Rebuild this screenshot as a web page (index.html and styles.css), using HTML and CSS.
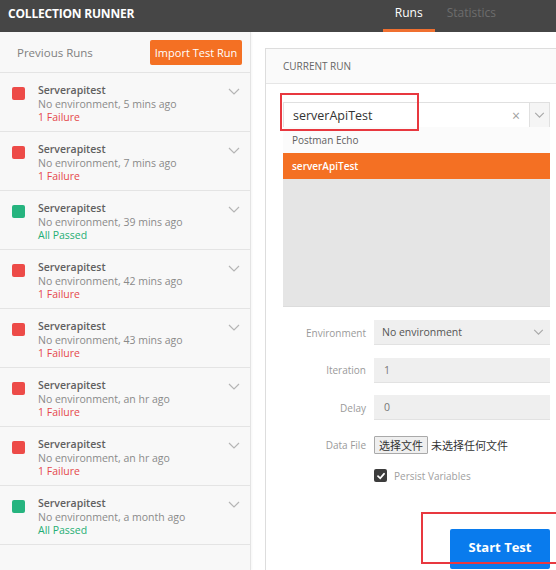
FILE: index.html
```html
<!DOCTYPE html>
<html>
<head>
<meta charset="utf-8">
<link rel="stylesheet" href="styles.css">
</head>
<body>
<div class="app">
  <header class="topbar">
    <div class="title">COLLECTION RUNNER</div>
    <nav class="tabs">
      <div class="tab active">Runs</div>
      <div class="tab">Statistics</div>
    </nav>
  </header>
  <div class="main">
    <aside class="sidebar">
      <div class="side-head">
        <span class="side-title">Previous Runs</span>
        <button class="import-btn">Import Test Run</button>
      </div>
      <div class="run"><span class="sq fail"></span><div class="run-text"><div class="run-name">Serverapitest</div><div class="run-meta">No environment, 5 mins ago</div><div class="run-status fail-t">1 Failure</div></div><svg class="chev" viewBox="0 0 12 7"><polyline points="1,1 6,6 11,1"/></svg></div>
      <div class="run"><span class="sq fail"></span><div class="run-text"><div class="run-name">Serverapitest</div><div class="run-meta">No environment, 7 mins ago</div><div class="run-status fail-t">1 Failure</div></div><svg class="chev" viewBox="0 0 12 7"><polyline points="1,1 6,6 11,1"/></svg></div>
      <div class="run"><span class="sq pass"></span><div class="run-text"><div class="run-name">Serverapitest</div><div class="run-meta">No environment, 39 mins ago</div><div class="run-status pass-t">All Passed</div></div><svg class="chev" viewBox="0 0 12 7"><polyline points="1,1 6,6 11,1"/></svg></div>
      <div class="run"><span class="sq fail"></span><div class="run-text"><div class="run-name">Serverapitest</div><div class="run-meta">No environment, 42 mins ago</div><div class="run-status fail-t">1 Failure</div></div><svg class="chev" viewBox="0 0 12 7"><polyline points="1,1 6,6 11,1"/></svg></div>
      <div class="run"><span class="sq fail"></span><div class="run-text"><div class="run-name">Serverapitest</div><div class="run-meta">No environment, 43 mins ago</div><div class="run-status fail-t">1 Failure</div></div><svg class="chev" viewBox="0 0 12 7"><polyline points="1,1 6,6 11,1"/></svg></div>
      <div class="run"><span class="sq fail"></span><div class="run-text"><div class="run-name">Serverapitest</div><div class="run-meta">No environment, an hr ago</div><div class="run-status fail-t">1 Failure</div></div><svg class="chev" viewBox="0 0 12 7"><polyline points="1,1 6,6 11,1"/></svg></div>
      <div class="run"><span class="sq fail"></span><div class="run-text"><div class="run-name">Serverapitest</div><div class="run-meta">No environment, an hr ago</div><div class="run-status fail-t">1 Failure</div></div><svg class="chev" viewBox="0 0 12 7"><polyline points="1,1 6,6 11,1"/></svg></div>
      <div class="run"><span class="sq pass"></span><div class="run-text"><div class="run-name">Serverapitest</div><div class="run-meta">No environment, a month ago</div><div class="run-status pass-t">All Passed</div></div><svg class="chev" viewBox="0 0 12 7"><polyline points="1,1 6,6 11,1"/></svg></div>
    </aside>
    <section class="content">
      <div class="card">
        <div class="card-head">CURRENT RUN</div>
        <div class="card-body">
          <div class="selector">
            <div class="sel-input">
              <span class="sel-value">serverApiTest</span>
              <span class="sel-clear">×</span>
              <span class="sel-arrow"><svg class="chev-sm" viewBox="0 0 12 7"><polyline points="1,1 6,6 11,1"/></svg></span>
            </div>
            <div class="sel-list">
              <div class="opt">Postman Echo</div>
              <div class="opt selected">serverApiTest</div>
              <div class="opt-rest"></div>
            </div>
            <div class="highlight hl-input"></div>
          </div>
          <div class="form">
            <div class="row"><label class="lbl">Environment</label><div class="field select"><span>No environment</span><svg class="chev-sm" viewBox="0 0 12 7"><polyline points="1,1 6,6 11,1"/></svg></div></div>
            <div class="row"><label class="lbl">Iteration</label><div class="field num">1</div></div>
            <div class="row"><label class="lbl">Delay</label><div class="field num">0</div></div>
            <div class="row file-row"><label class="lbl">Data File</label><div class="file"><span class="file-btn">选择文件</span><span class="file-none">未选择任何文件</span></div></div>
            <div class="row check-row"><span class="lbl"></span><div class="check"><span class="box"><svg viewBox="0 0 10 10"><polyline points="2,5.2 4.2,7.3 8,2.8"/></svg></span><span class="check-text">Persist Variables</span></div></div>
          </div>
          <div class="actions">
            <button class="start-btn">Start Test</button>
            <div class="highlight hl-start"></div>
          </div>
        </div>
      </div>
    </section>
  </div>
</div>
</body>
</html>
```
FILE: styles.css
```css
* { box-sizing: border-box; }
html, body { margin: 0; padding: 0; }
body {
  width: 556px;
  height: 570px;
  overflow: hidden;
  font-family: "Open Sans", "Noto Sans", "Noto Sans CJK SC", sans-serif;
  background: #ffffff;
}
.app { width: 556px; height: 570px; display: flex; flex-direction: column; }
.topbar {
  height: 32px;
  background: #464646;
  display: flex;
  align-items: stretch;
  padding-left: 8px;
  flex: none;
}
.title { color: #ffffff; font-weight: 700; font-size: 12px; letter-spacing: -0.2px; display: flex; align-items: center; padding-bottom: 6px; }
.tabs { margin-left: auto; margin-right: 48px; display: flex; height: 32px; }
.tab {
  height: 32px;
  padding: 0 12px 4px 12px;
  display: flex;
  align-items: center;
  font-size: 12px;
  color: #6d6d6d;
  border-bottom: 3px solid transparent;
}
.tab.active { color: #ffffff; border-bottom-color: #f07030; }

.main { flex: 1; display: flex; min-height: 0; }
.sidebar {
  width: 251px;
  flex: none;
  background: #f8f8f8;
  border-right: 1px solid #e4e4e4;
  box-shadow: 1px 0 2px rgba(0,0,0,0.04);
}
.side-head {
  height: 41px;
  border-bottom: 1px solid #e4e4e4;
  display: flex;
  align-items: center;
  justify-content: space-between;
  padding: 0 8px 0 17px;
}
.side-title { font-size: 11.5px; color: #808080; }
.import-btn {
  width: 92px;
  height: 25px;
  border: none;
  border-radius: 2px;
  background: #f47023;
  color: #ffffff;
  font-family: inherit;
  font-size: 11px;
  padding: 0;
}
.run {
  height: 59px;
  border-bottom: 1px solid #e4e4e4;
  display: flex;
  align-items: flex-start;
  padding: 11px 10px 0 12px;
}
.sq { width: 13px; height: 13px; border-radius: 2px; margin-top: 3px; flex: none; }
.sq.fail { background: #ed4b48; }
.sq.pass { background: #26b47f; }
.run-text { margin-left: 13px; flex: 1; font-size: 10.5px; line-height: 13.5px; }
.run-name { color: #606060; font-weight: 600; }
.run-meta { color: #8a8a8a; }
.fail-t { color: #e5484b; }
.pass-t { color: #1fae74; }
.chev { width: 12px; height: 7px; margin-top: 4px; fill: none; stroke: #b5b5b5; stroke-width: 1.2; }

.content { flex: 1; padding: 16px 0 0 14px; min-width: 0; }
.card {
  width: 303px;
  height: 100%;
  border: 1px solid #dddddd;
  border-bottom: none;
  background: #ffffff;
}
.card-head {
  height: 35px;
  background: #fafafa;
  border-bottom: 1px solid #e6e6e6;
  padding-left: 17px;
  display: flex;
  align-items: center;
  font-size: 10px;
  color: #666666;
}
.card-body { padding: 18px 17px 0 17px; }
.selector { position: relative; width: 267px; }
.sel-input {
  height: 25px;
  border: 1px solid #e0e0e0;
  border-bottom: none;
  display: flex;
  align-items: center;
  background: #ffffff;
}
.sel-value { flex: 1; padding-left: 9px; font-size: 12.5px; color: #333333; }
.sel-clear { width: 18px; color: #a0a0a0; font-size: 14px; text-align: center; margin-right: 4px; }
.sel-arrow {
  width: 20px;
  height: 24px;
  border-left: 1px solid #e0e0e0;
  background: #f5f5f5;
  display: flex;
  align-items: center;
  justify-content: center;
}
.chev-sm { width: 11px; height: 6px; fill: none; stroke: #a8a8a8; stroke-width: 1.3; }
.sel-list { background: #e6e6e6; }
.opt {
  height: 26px;
  padding-left: 9px;
  display: flex;
  align-items: center;
  font-size: 10px;
  color: #606060;
  background: #fbfbfb;
}
.opt.selected { background: #f47023; color: #ffffff; font-weight: 600; }
.opt-rest { height: 128px; background: #e5e5e5; border-bottom: 1px solid #dcdcdc; }
.highlight { position: absolute; border: 2px solid #e8383f; pointer-events: none; }
.hl-input { left: -3px; top: -9px; width: 139px; height: 38px; }

.form { margin-top: 13px; display: flex; flex-direction: column; }
.row { display: flex; align-items: center; height: 25px; margin-bottom: 12.5px; }
.lbl { width: 83px; text-align: right; font-size: 10px; color: #9a9a9a; flex: none; margin-right: 8px; }
.field {
  width: 176px;
  height: 25px;
  background: #efefef;
  border-bottom: 1px solid #e2e2e2;
  display: flex;
  align-items: center;
  font-size: 10.5px;
  color: #555555;
}
.field.select { padding: 0 6px 0 8px; justify-content: space-between; }
.field.num { padding-left: 10px; color: #777777; }
.file-row { height: 18px; margin-top: 3px; margin-bottom: 15px; }
.file { display: flex; align-items: center; font-family: "Noto Sans CJK SC", sans-serif; font-size: 11px; color: #333333; }
.file-btn {
  height: 18px;
  padding: 0 4px;
  border: 1px solid #a9a9a9;
  background: #efefef;
  display: flex;
  align-items: center;
  border-radius: 1px;
}
.file-none { margin-left: 3px; }
.check-row { height: 14px; }
.check { display: flex; align-items: center; }
.box {
  width: 13px;
  height: 13px;
  border-radius: 2px;
  background: #3c3c3c;
  display: flex;
  align-items: center;
  justify-content: center;
}
.box svg { width: 10px; height: 10px; fill: none; stroke: #ffffff; stroke-width: 1.8; stroke-linecap: round; }
.check-text { margin-left: 7px; font-size: 10px; color: #a0a0a0; }
.actions { position: relative; display: flex; justify-content: flex-end; width: 267px; margin-top: 34px; }
.start-btn {
  width: 100px;
  height: 40px;
  border: none;
  border-radius: 2px;
  background: #097bed;
  color: #ffffff;
  font-family: inherit;
  font-weight: 700;
  font-size: 13px;
  padding: 0 0 4px 0;
}
.hl-start { left: 138px; top: -17px; width: 140px; height: 52px; }
```
